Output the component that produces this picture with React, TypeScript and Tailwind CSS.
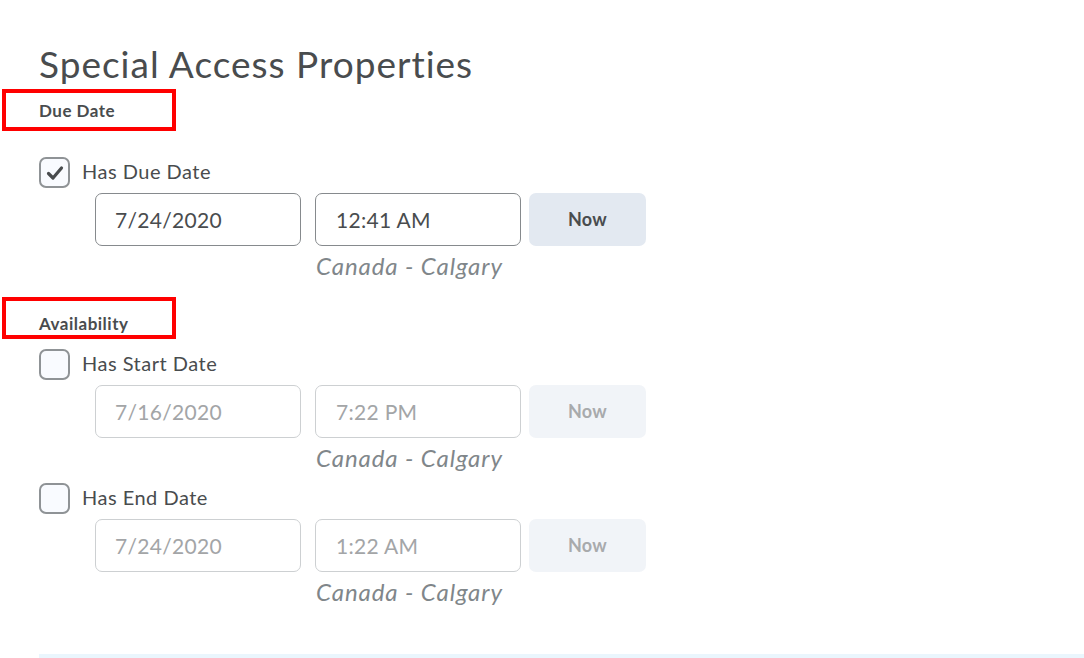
import React from "react";

const font = { fontFamily: "Lato, 'Open Sans', sans-serif" };

function Check({ checked }: { checked: boolean }) {
  return (
    <div className="w-[31px] h-[31px] rounded-[7px] border-2 border-[#8f9396] bg-[#f9fbff] flex items-center justify-center shrink-0">
      {checked && (
        <svg width="20" height="20" viewBox="0 0 20 20">
          <path d="M3.5 10.5 L8 15 L16.5 5" fill="none" stroke="#494c4e" strokeWidth="3.2" strokeLinecap="round" strokeLinejoin="round" />
        </svg>
      )}
    </div>
  );
}

function Heading({ text, pad }: { text: string; pad: string }) {
  return (
    <div className={`ml-[-37px] w-[174px] h-[42px] border-4 border-[#ff0000] flex items-center pl-[33px] ${pad}`}>
      <span className="text-[17px] font-bold text-[#494c4e] tracking-[0.5px]">{text}</span>
    </div>
  );
}

function Row({
  label,
  checked,
  date,
  time,
  gapTop,
}: {
  label: string;
  checked: boolean;
  date: string;
  time: string;
  gapTop: string;
}) {
  const txt = checked ? "text-[#494c4e]" : "text-[#a3a5a7]";
  const border = checked ? "border-[#868a8d]" : "border-[#cdd0d2]";
  return (
    <div className={gapTop}>
      <div className="flex items-center gap-[12px] h-[31px]">
        <Check checked={checked} />
        <span className="text-[20px] leading-[24px] text-[#494c4e] tracking-[0.5px] mb-[4px]">{label}</span>
      </div>
      <div className="ml-[56px] mt-[5px] flex">
        <div className={`w-[206px] h-[53px] rounded-[7px] border-[1.5px] ${border} bg-white flex items-center pl-[19px] text-[21px] tracking-[0.3px] ${txt}`}>
          {date}
        </div>
        <div className={`ml-[14px] w-[206px] h-[53px] rounded-[7px] border-[1.5px] ${border} bg-white flex items-center pl-[20px] text-[21px] tracking-[0.3px] ${txt}`}>
          {time}
        </div>
        <div
          className={`ml-[8px] w-[117px] h-[53px] rounded-[7px] flex items-center justify-center text-[18px] font-bold tracking-[0.3px] ${
            checked ? "bg-[#e3e9f1] text-[#494c4e]" : "bg-[#f1f4f8] text-[#a8aaac]"
          }`}
        >
          Now
        </div>
      </div>
      <div className="ml-[277px] mt-[6px] text-[24px] italic text-[#80868a] leading-[28px] tracking-[0.9px]">Canada - Calgary</div>
    </div>
  );
}

export default function App() {
  return (
    <div style={font} className="w-[1084px] h-[658px] bg-white overflow-hidden relative">
      <div className="pl-[39px] pt-[42px]">
        <h1 className="text-[37px] leading-[44px] text-[#494c4e] font-normal tracking-[1px]">Special Access Properties</h1>
        <div className="mt-[3px]">
          <Heading text="Due Date" pad="pt-[1px]" />
        </div>
        <Row label="Has Due Date" checked date="7/24/2020" time="12:41 AM" gapTop="mt-[26px]" />
        <div className="mt-[17px]">
          <Heading text="Availability" pad="pt-[11px]" />
        </div>
        <Row label="Has Start Date" checked={false} date="7/16/2020" time="7:22 PM" gapTop="mt-[10px]" />
        <Row label="Has End Date" checked={false} date="7/24/2020" time="1:22 AM" gapTop="mt-[11px]" />
        <div className="mt-[48px] h-[10px] bg-[#eaf6fd]" />
      </div>
    </div>
  );
}
